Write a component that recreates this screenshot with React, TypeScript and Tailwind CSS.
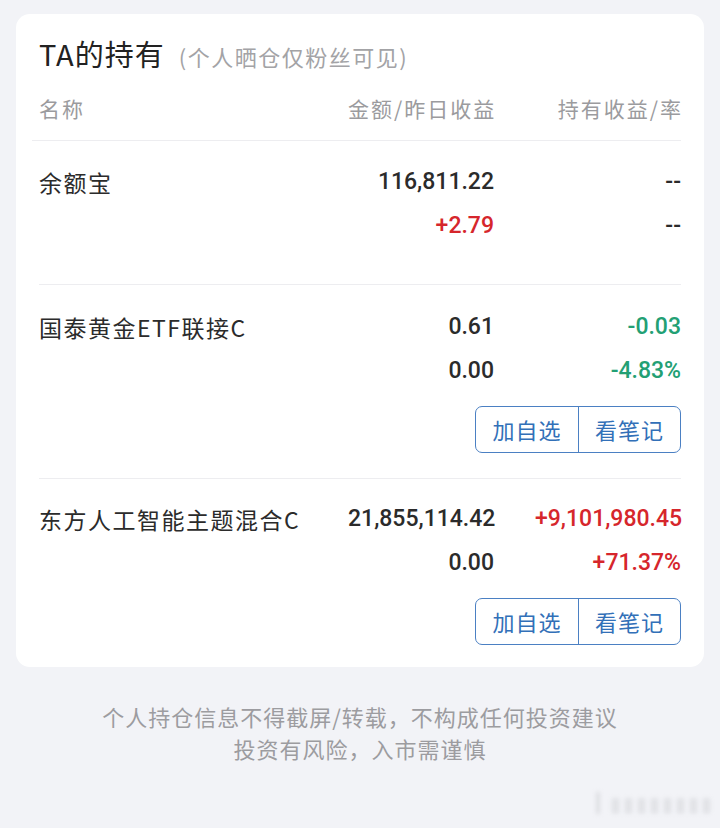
import React from "react";

const cjk = { fontFamily: '"Noto Sans CJK SC", "Noto Sans", sans-serif' };
const num = { fontFamily: 'Roboto, "Noto Sans CJK SC", sans-serif' };

type Row = {
  name: string;
  amount: string;
  yesterday: string;
  yesterdayColor: string;
  hold: string;
  holdColor: string;
  rate: string;
  rateColor: string;
  buttons: boolean;
  pt: string;
  pb: string;
  last?: boolean;
};

const rows: Row[] = [
  {
    name: "余额宝",
    amount: "116,811.22",
    yesterday: "+2.79",
    yesterdayColor: "text-[#d6262c]",
    hold: "--",
    holdColor: "text-[#2b2b2b]",
    rate: "--",
    rateColor: "text-[#2b2b2b]",
    buttons: false,
    pt: "pt-[19px]",
    pb: "pb-[36px]",
  },
  {
    name: "国泰黄金ETF联接C",
    amount: "0.61",
    yesterday: "0.00",
    yesterdayColor: "text-[#2b2b2b]",
    hold: "-0.03",
    holdColor: "text-[#23a074]",
    rate: "-4.83%",
    rateColor: "text-[#23a074]",
    buttons: true,
    pt: "pt-[20px]",
    pb: "pb-[25px]",
  },
  {
    name: "东方人工智能主题混合C",
    amount: "21,855,114.42",
    yesterday: "0.00",
    yesterdayColor: "text-[#2b2b2b]",
    hold: "+9,101,980.45",
    holdColor: "text-[#d6262c]",
    rate: "+71.37%",
    rateColor: "text-[#d6262c]",
    buttons: true,
    pt: "pt-[18px]",
    pb: "pb-[22px]",
    last: true,
  },
];

function Holding({ r }: { r: Row }) {
  return (
    <div className={`${r.pt} ${r.pb} ${r.last ? "" : "border-b-[1.5px] border-[#ededf0]"}`}>
      <div className="grid grid-cols-[1fr_146px_146px] gap-x-[41px]">
        <div
          className="text-[23px] leading-[44px] tracking-[1.5px] text-[#2b2b2b] whitespace-nowrap"
          style={cjk}
        >
          {r.name}
        </div>
        <div
          className="text-[23px] leading-[44px] font-medium text-[#2b2b2b] text-right whitespace-nowrap"
          style={num}
        >
          {r.amount}
        </div>
        <div
          className={`text-[23px] leading-[44px] font-medium text-right whitespace-nowrap ${r.holdColor}`}
          style={num}
        >
          {r.hold}
        </div>
        <div />
        <div
          className={`text-[23px] leading-[44px] font-medium text-right whitespace-nowrap ${r.yesterdayColor}`}
          style={num}
        >
          {r.yesterday}
        </div>
        <div
          className={`text-[23px] leading-[44px] font-medium text-right whitespace-nowrap ${r.rateColor}`}
          style={num}
        >
          {r.rate}
        </div>
      </div>
      {r.buttons && (
        <div className="flex justify-end mt-[13px]">
          <div className="flex h-[47px] border-[1.5px] border-[#4b80c3] rounded-[7px] overflow-hidden">
            <div
              className="w-[103px] flex items-center justify-center text-[22px] tracking-[1px] text-[#3270b8] border-r-[1.5px] border-[#4b80c3]"
              style={cjk}
            >
              加自选
            </div>
            <div
              className="w-[101px] flex items-center justify-center text-[22px] tracking-[1px] text-[#3270b8]"
              style={cjk}
            >
              看笔记
            </div>
          </div>
        </div>
      )}
    </div>
  );
}

export default function App() {
  return (
    <div className="relative w-[720px] h-[828px] bg-[#f2f3f7] pt-[14px] overflow-hidden" style={cjk}>
      <div className="mx-[16px] bg-white rounded-[14px] px-[23px] pt-[19px]">
        <div className="flex items-baseline h-[40px]">
          <span className="text-[29px] leading-[40px] tracking-[1px] text-[#222222]" style={cjk}>
            TA的持有
          </span>
          <span className="ml-[14px] text-[22px] tracking-[1.5px] text-[#a3a3a6]" style={cjk}>
            (个人晒仓仅粉丝可见)
          </span>
        </div>
        <div className="mt-[20px] pb-[17px] border-b-[1.5px] border-[#ededf0] -ml-[7px] pl-[7px]">
          <div className="grid grid-cols-[1fr_146px_146px] gap-x-[41px] text-[21px] leading-[30px] tracking-[2px] text-[#9b9b9e]">
            <div>名称</div>
            <div className="text-right -mr-[2px] whitespace-nowrap">金额/昨日收益</div>
            <div className="text-right -mr-[2px] whitespace-nowrap">持有收益/率</div>
          </div>
        </div>
        {rows.map((r) => (
          <Holding key={r.name} r={r} />
        ))}
      </div>
      <div className="mt-[33px] text-center text-[22px] leading-[32px] tracking-[1px] text-[#9c9ca0]" style={cjk}>
        <div>个人持仓信息不得截屏/转载，不构成任何投资建议</div>
        <div>投资有风险，入市需谨慎</div>
      </div>
      <div className="absolute right-[6px] bottom-[10px] flex items-center gap-[10px] blur-[2px] opacity-60">
        <div className="w-[4px] h-[22px] bg-[#cfd0d4]" />
        <div className="text-[20px] tracking-[2px] text-[#d6d7db]">▮▮▮▮▮▮▮▮</div>
      </div>
    </div>
  );
}
